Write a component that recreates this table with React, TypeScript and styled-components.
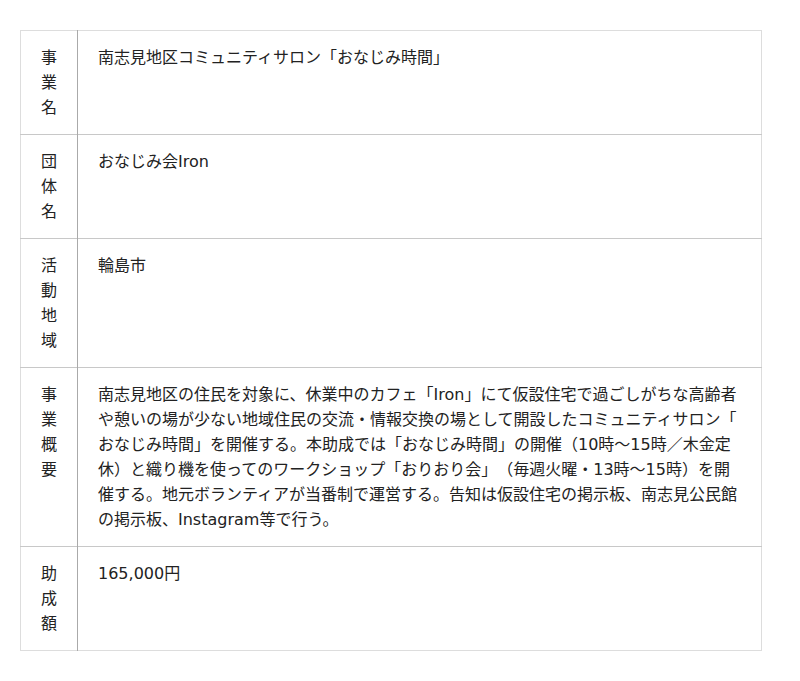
import React from "react";
import styled, { createGlobalStyle } from "styled-components";

const Global = createGlobalStyle`
  html, body { margin: 0; padding: 0; background: #fff; }
  body {
    font-family: "DejaVu Sans", "Noto Sans CJK JP", sans-serif;
    color: #222;
  }
`;

const Page = styled.div`
  padding: 30px 20px;
`;

const Table = styled.table`
  width: 742px;
  border-collapse: collapse;
  table-layout: fixed;
  border: 1px solid #ddd;
  font-size: 16px;
  line-height: 25px;
  text-spacing-trim: space-all;
`;

const Row = styled.tr`
  border-bottom: 1px solid #c8c8c8;
  &:last-child { border-bottom: 1px solid #ddd; }
`;

const Label = styled.th`
  width: 56px;
  padding: 14px 0;
  font-weight: normal;
  text-align: center;
  vertical-align: top;
  border-right: 1px solid #aaa;
`;

const LabelChar = styled.span`
  display: block;
`;

const Content = styled.td`
  padding: 14px 20px;
  vertical-align: top;
  text-align: left;
  line-break: anywhere;
  text-spacing-trim: space-all;
`;

const rows: { label: string; value: string }[] = [
  { label: "事業名", value: "南志見地区コミュニティサロン「おなじみ時間」" },
  { label: "団体名", value: "おなじみ会Iron" },
  { label: "活動地域", value: "輪島市" },
  {
    label: "事業概要",
    value:
      "南志見地区の住民を対象に、休業中のカフェ「Iron」にて仮設住宅で過ごしがちな高齢者や憩いの場が少ない地域住民の交流・情報交換の場として開設したコミュニティサロン「おなじみ時間」を開催する。本助成では「おなじみ時間」の開催（10時〜15時／木金定休）と織り機を使ってのワークショップ「おりおり会」（毎週火曜・13時〜15時）を開催する。地元ボランティアが当番制で運営する。告知は仮設住宅の掲示板、南志見公民館の掲示板、Instagram等で行う。",
  },
  { label: "助成額", value: "165,000円" },
];

export default function App() {
  return (
    <>
      <Global />
      <Page>
        <Table>
          <tbody>
            {rows.map((r) => (
              <Row key={r.label}>
                <Label>
                  {Array.from(r.label).map((c, i) => (
                    <LabelChar key={i}>{c}</LabelChar>
                  ))}
                </Label>
                <Content>{r.value}</Content>
              </Row>
            ))}
          </tbody>
        </Table>
      </Page>
    </>
  );
}
